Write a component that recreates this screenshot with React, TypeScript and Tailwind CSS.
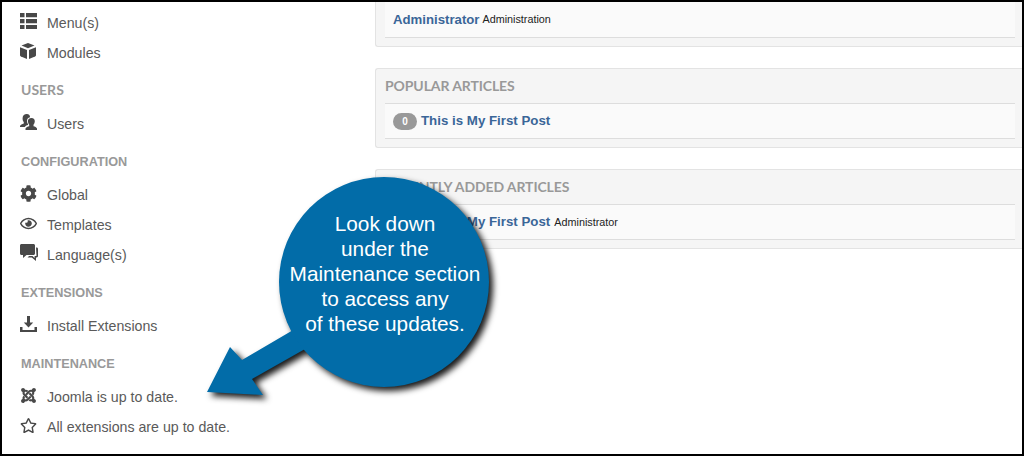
import type { ReactNode } from "react";
import { FaCog, FaRegEye, FaJoomla, FaRegStar } from "react-icons/fa";

const IconMenu = () => (
  <svg viewBox="0 0 17 16" className="w-[17px] h-[16px]" fill="currentColor">
    <path d="M0 0h4.500v4.200H0zM6 0h11v4.200H6zM0 6h4.500v4.200H0zM6 6h11v4.200H6zM0 12h4.500v4H0zM6 12h11v4H6z" />
  </svg>
);

const IconCube = () => (
  <svg viewBox="0 0 16 16" className="w-[16px] h-[16px]" fill="currentColor">
    <path d="M8 0l6.500 2.600L8 5.300 1.500 2.600z" />
    <path d="M0 4.200l7 2.700V16L1 13.600C.4 13.300 0 12.800 0 12.200z" />
    <path d="M16 4.200L9 6.900V16l6-2.400c.6-.3 1-.8 1-1.400z" />
  </svg>
);

const IconUsers = () => (
  <svg viewBox="0 0 17 16" className="w-[17px] h-[16px]" fill="currentColor">
    <path d="M6.800 0C9 0 10.200 1.300 10 3.200c-1.800.3-3.200 1.900-3 4.200.1 1 .5 1.900 1 2.500v1C6.500 11.300 5.200 12 4.700 13H0v-1c.4-1.300 2.200-2 3.800-2.500V8.200C2.900 7.200 2.500 5.800 2.600 4 2.700 1.500 4.400 0 6.800 0z" />
    <path d="M11.500 4c2.200 0 3.400 1.400 3.300 3.500-.1 1.400-.5 2.500-1.300 3.300v1.400c1.500.4 3 1.100 3.500 2.300V16H5.500v-1.500c.5-1.200 2.200-1.900 3.700-2.300v-1.400C8.400 10 8 8.900 7.900 7.500 7.800 5.400 9.200 4 11.500 4z" />
  </svg>
);

const IconLanguage = () => (
  <svg viewBox="0 0 18 18" className="w-[18px] h-[18px]" fill="currentColor">
    <path d="M1.500 0h12c.8 0 1.500.7 1.500 1.500v8c0 .8-.7 1.500-1.500 1.500H6.500L3 14v-3H1.500C.7 11 0 10.300 0 9.500v-8C0 .7.700 0 1.500 0z" />
    <path d="M16 3.500h.6c.8 0 1.400.6 1.400 1.400v7.200c0 .8-.6 1.400-1.400 1.400H16v3.500l-4.200-3.500H7.500l1.600-1.400h3.400l2.100 1.800v-1.800h1.900z" />
  </svg>
);

const IconInstall = () => (
  <svg viewBox="0 0 17 16" className="w-[17px] h-[16px]" fill="currentColor">
    <path d="M7 0h3v6.500h3.200L8.500 11.500 3.800 6.500H7z" />
    <path d="M0 11h2.500v3h12v-3H17v5H0z" />
  </svg>
);

const NavItem = ({ icon, label }: { icon: ReactNode; label: string }) => (
  <div className="h-[30px] flex items-center">
    <span className="w-[27px] -ml-[1px] flex text-[#484848] -mt-[6px]">{icon}</span>
    <span className="text-[14.2px] text-[#5a5a5a]">{label}</span>
  </div>
);

const NavHeader = ({ children, lato }: { children: ReactNode; lato?: boolean }) => (
  <div
    className={`h-[30px] flex items-center font-bold text-[#999] ${
      lato ? "mt-[5px] mb-[6px] font-['Lato',sans-serif] text-[14px]" : "mt-[6px] mb-[5px] pt-[4px] text-[12.7px]"
    }`}
  >
    {children}
  </div>
);

const Panel = ({ title, children, className }: { title?: string; children: ReactNode; className?: string }) => (
  <div className={`border border-r-0 border-[#e3e3e3] rounded-l-[3px] bg-[#f5f5f5] pl-[9px] pr-[7px] pb-[8px] ${className ?? ""}`}>
    {title && (
      <div className="h-[35px] pb-[2px] flex items-center font-['Lato',sans-serif] font-bold text-[14px] tracking-[-0.1px] text-[#999] border-b border-[#ddd]">
        {title}
      </div>
    )}
    {children}
  </div>
);

const Row = ({ children, className }: { children: ReactNode; className?: string }) => (
  <div className={`bg-[#fafafa] border-b border-[#ddd] pl-[8px] flex items-center ${className ?? ""}`}>{children}</div>
);

const Badge = () => (
  <span className="w-[24px] h-[17px] rounded-full bg-[#999] text-white text-[10px] font-bold flex items-center justify-center">0</span>
);

const Callout = () => (
  <div className="absolute left-[198px] top-[170px] w-[310px] h-[240px]">
    <svg width="310" height="240" viewBox="0 0 310 240" className="absolute inset-0 drop-shadow-[4px_4px_3px_rgba(0,0,0,0.9)]">
      <path d="M7 220 L30 175 L42 188 L100 154 L105 177 L52 207 L63 223 Z" fill="#026ca8" />
      <circle cx="184" cy="110" r="105" fill="#026ca8" />
    </svg>
    <div className="absolute left-[85px] top-[39px] w-[200px] text-center text-white text-[20.8px] leading-[25px] whitespace-nowrap">
      <div>Look down</div>
      <div>under the</div>
      <div>Maintenance section</div>
      <div>to access any</div>
      <div>of these updates.</div>
    </div>
  </div>
);

export default function App() {
  return (
    <div className="relative w-[1024px] h-[456px] border-2 border-black overflow-hidden flex bg-white font-['Liberation_Sans',Arial,sans-serif]">
      <aside className="w-[373px] shrink-0 pl-[19px] pt-[7px]">
        <NavItem icon={<IconMenu />} label="Menu(s)" />
        <NavItem icon={<IconCube />} label="Modules" />
        <NavHeader lato>USERS</NavHeader>
        <NavItem icon={<IconUsers />} label="Users" />
        <NavHeader>CONFIGURATION</NavHeader>
        <NavItem icon={<FaCog size={17} />} label="Global" />
        <NavItem icon={<FaRegEye size={17} />} label="Templates" />
        <NavItem icon={<IconLanguage />} label="Language(s)" />
        <NavHeader>EXTENSIONS</NavHeader>
        <NavItem icon={<IconInstall />} label="Install Extensions" />
        <NavHeader>MAINTENANCE</NavHeader>
        <NavItem icon={<FaJoomla size={17} />} label="Joomla is up to date." />
        <NavItem icon={<FaRegStar size={17} />} label="All extensions are up to date." />
      </aside>
      <main className="flex-1 flex flex-col gap-[21px]">
        <Panel className="border-t-0 rounded-tl-none">
          <Row className="h-[36px]">
            <span className="font-bold text-[13.2px] text-[#3a6698]">Administrator</span>
            <span className="ml-[3px] text-[10.8px] text-[#222]">Administration</span>
          </Row>
        </Panel>
        <Panel title="POPULAR ARTICLES">
          <Row className="h-[35px]">
            <Badge />
            <span className="ml-[4px] -mt-[1px] font-bold text-[13.3px] text-[#3a6698]">This is My First Post</span>
          </Row>
        </Panel>
        <Panel title="RECENTLY ADDED ARTICLES">
          <Row className="h-[35px]">
            <Badge />
            <span className="ml-[4px] -mt-[1px] font-bold text-[13.3px] text-[#3a6698]">This is My First Post</span>
            <span className="ml-[4px] text-[10.8px] text-[#222]">Administrator</span>
          </Row>
        </Panel>
      </main>
      <Callout />
    </div>
  );
}
